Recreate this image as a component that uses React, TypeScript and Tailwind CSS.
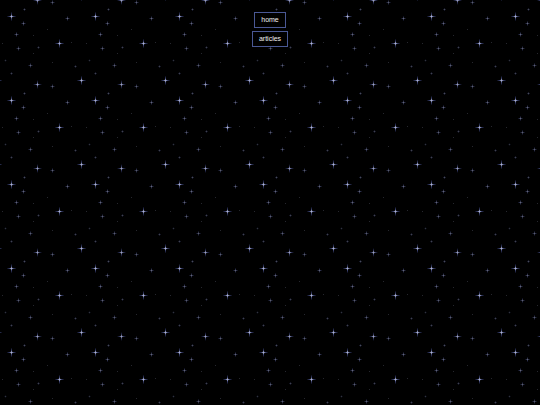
import React from "react";

type Star = { x: number; y: number; r: number; c: number; o: number };

// One 84×84 tile of the starfield; r = arm length, c = core radius, o = opacity
const STARS: Star[] = [
  { x: 11, y: 16, r: 5, c: 1, o: 0.8 },
  { x: 59, y: 43, r: 5, c: 1, o: 0.8 },
  { x: 81, y: 80, r: 5, c: 1, o: 0.8 },
  { x: 37, y: 0, r: 4.5, c: 0.9, o: 0.72 },
  { x: 23, y: 23, r: 3, c: 0.7, o: 0.45 },
  { x: 16, y: 34, r: 3, c: 0.7, o: 0.45 },
  { x: 18, y: 48, r: 3, c: 0.7, o: 0.42 },
  { x: 67, y: 18, r: 3, c: 0.7, o: 0.45 },
  { x: 52, y: 2, r: 3, c: 0.7, o: 0.42 },
  { x: 30, y: 65, r: 3, c: 0.7, o: 0.42 },
  { x: 24, y: 9, r: 2, c: 0.6, o: 0.34 },
  { x: 38, y: 47, r: 2, c: 0.6, o: 0.3 },
  { x: 75, y: 66, r: 2, c: 0.6, o: 0.3 },
  { x: 11, y: 73, r: 2, c: 0.6, o: 0.3 },
  { x: 5, y: 60, r: 1.5, c: 0.5, o: 0.24 },
  { x: 47, y: 29, r: 1, c: 0.5, o: 0.18 },
  { x: 33, y: 35, r: 1, c: 0.5, o: 0.18 },
  { x: 71, y: 42, r: 1, c: 0.5, o: 0.18 },
  { x: 33, y: 53, r: 1, c: 0.5, o: 0.18 },
  { x: 52, y: 62, r: 1, c: 0.5, o: 0.18 },
  { x: 2, y: 43, r: 1, c: 0.5, o: 0.18 },
];

const SHIFTS = [-84, 0, 84];

function Sparkle({ x, y, r, c, o }: Star) {
  return (
    <g transform={`translate(${x + 0.5} ${y + 0.5})`} opacity={o}>
      <rect x={-r} y={-0.5} width={2 * r} height={1} fill="url(#armH)" />
      <rect x={-0.5} y={-r} width={1} height={2 * r} fill="url(#armV)" />
      <circle r={c} fill="#dfe4ff" />
    </g>
  );
}

function Starfield() {
  return (
    <svg className="absolute inset-0 h-full w-full" aria-hidden="true">
      <defs>
        <linearGradient id="armH" x1="0" y1="0" x2="1" y2="0">
          <stop offset="0" stopColor="#5a68d8" stopOpacity="0" />
          <stop offset="0.5" stopColor="#9aa6f4" stopOpacity="1" />
          <stop offset="1" stopColor="#5a68d8" stopOpacity="0" />
        </linearGradient>
        <linearGradient id="armV" x1="0" y1="0" x2="0" y2="1">
          <stop offset="0" stopColor="#5a68d8" stopOpacity="0" />
          <stop offset="0.5" stopColor="#9aa6f4" stopOpacity="1" />
          <stop offset="1" stopColor="#5a68d8" stopOpacity="0" />
        </linearGradient>
        <pattern id="sky" width="84" height="84" patternUnits="userSpaceOnUse">
          {STARS.flatMap((s, i) =>
            SHIFTS.flatMap((dx) =>
              SHIFTS.map((dy) => (
                <Sparkle key={`${i}-${dx}-${dy}`} {...s} x={s.x + dx} y={s.y + dy} />
              ))
            )
          )}
        </pattern>
      </defs>
      <rect width="100%" height="100%" fill="url(#sky)" />
    </svg>
  );
}

function NavButton({ label }: { label: string }) {
  return (
    <a
      href="#"
      className="block border border-[#4a5894] bg-black px-[6px] py-[3px] text-[7px] leading-[8px] text-[#f0f0f0] no-underline"
    >
      {label}
    </a>
  );
}

export default function App() {
  return (
    <div
      className="relative min-h-screen w-full overflow-hidden bg-black"
      style={{ fontFamily: '"Liberation Sans", Arial, sans-serif' }}
    >
      <Starfield />
      <nav className="relative flex flex-col items-center gap-[3px] pt-[12px] [transform:translateZ(0)]">
        <NavButton label="home" />
        <NavButton label="articles" />
      </nav>
    </div>
  );
}
